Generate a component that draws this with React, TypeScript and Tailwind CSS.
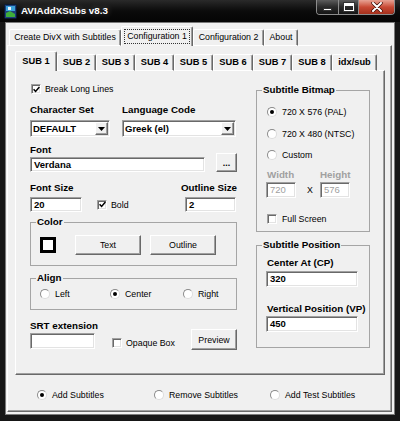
import React from 'react'

const sunken =
  'bg-white border border-t-[#a0a0a0] border-l-[#a0a0a0] border-b-white border-r-white shadow-[inset_1px_1px_0_#696969,inset_-1px_-1px_0_#e3e3e3]'
const raised =
  'bg-[#f0f0f0] border border-t-white border-l-white border-b-[#696969] border-r-[#696969] shadow-[inset_-1px_-1px_0_#a0a0a0]'
const label = 'h-[12px] leading-[12px] text-[9.8px] font-bold whitespace-nowrap'
const text = 'leading-[12px] text-[8.8px] whitespace-nowrap'

function Check({ on }: { on?: boolean }) {
  return (
    <span className={`w-[10px] h-[10px] shrink-0 flex items-center justify-center ${sunken}`}>
      {on && (
        <svg width="7" height="7" viewBox="0 0 7 7">
          <path d="M0.6 3.2 L2.6 5.4 L6.4 1" fill="none" stroke="#000" strokeWidth="1.5" />
        </svg>
      )}
    </span>
  )
}

function Radio({ on }: { on?: boolean }) {
  return (
    <span className="w-[10px] h-[10px] shrink-0 rounded-full bg-white border border-[#8a8a8a] border-b-[#dcdcdc] border-r-[#dcdcdc] flex items-center justify-center">
      {on && <span className="w-[4px] h-[4px] rounded-full bg-black" />}
    </span>
  )
}

function RadioItem({ on, children, className = '' }: { on?: boolean; children: React.ReactNode; className?: string }) {
  return (
    <div className={`flex items-center gap-[5px] h-[12px] ${className}`}>
      <Radio on={on} />
      <span className={text}>{children}</span>
    </div>
  )
}

function Field({ value, className = '', muted }: { value?: string; className?: string; muted?: boolean }) {
  return (
    <div
      className={`${sunken} flex items-center pl-[3px] text-[9.5px] leading-none ${
        muted ? 'text-[#a0a0a0] font-normal bg-[#fafafa]' : 'font-bold'
      } ${className}`}
    >
      {value}
    </div>
  )
}

function Combo({ value, className = '' }: { value: string; className?: string }) {
  return (
    <div className={`${sunken} h-[17px] flex items-center ${className}`}>
      <span className="flex-1 pl-[2px] text-[9.5px] font-bold leading-none">{value}</span>
      <span className={`w-[13px] h-[13px] mr-[1px] flex items-center justify-center ${raised}`}>
        <svg width="7" height="4" viewBox="0 0 7 4">
          <path d="M0 0 H7 L3.5 4 Z" fill="#000" />
        </svg>
      </span>
    </div>
  )
}

function Btn({ children, className = '' }: { children: React.ReactNode; className?: string }) {
  return <div className={`${raised} flex items-center justify-center ${text} ${className}`}>{children}</div>
}

function Tab({ children, active, className = '', bold }: { children: React.ReactNode; active?: boolean; className?: string; bold?: boolean }) {
  return (
    <div
      className={`shrink-0 flex items-center justify-center rounded-t-[2px] bg-[#f0f0f0] border-t border-l border-t-white border-l-white border-r border-r-[#696969] shadow-[inset_-1px_0_0_#a0a0a0] ${
        active ? 'h-[20px]' : 'h-[17px] border-b border-b-white'
      } ${bold ? 'text-[9.3px] font-bold' : 'text-[8.8px]'} leading-none whitespace-nowrap ${className}`}
    >
      {children}
    </div>
  )
}

function Group({ title, className = '', children }: { title: string; className?: string; children: React.ReactNode }) {
  return (
    <fieldset className={`border border-[#a5a5a5] ${className}`}>
      <legend className={`ml-[5px] px-[1px] ${label}`}>{title}</legend>
      {children}
    </fieldset>
  )
}

const subTabs = [
  ['SUB 1', 'w-[42px]'],
  ['SUB 2', 'w-[39px]'],
  ['SUB 3', 'w-[39px]'],
  ['SUB 4', 'w-[39px]'],
  ['SUB 5', 'w-[39px]'],
  ['SUB 6', 'w-[40px]'],
  ['SUB 7', 'w-[39px]'],
  ['SUB 8', 'w-[40px]'],
  ['idx/sub', 'w-[45px]'],
]

export default function App() {
  return (
    <div className="w-[400px] h-[421px] bg-[#161616] flex flex-col overflow-hidden font-['Liberation_Sans',Arial,sans-serif] text-black">
      {/* title bar */}
      <div className="h-[22px] flex items-start bg-gradient-to-b from-[#2a2a2a] via-[#0b0b0b] to-[#050505]">
        <div className="flex items-center h-[22px] pl-[4px] gap-[4px]">
          <svg width="13" height="15" viewBox="0 0 13 15">
            <rect x="0.5" y="0.5" width="12" height="14" rx="1" fill="#1d3f7a" stroke="#0a1a33" />
            <rect x="2" y="2" width="9" height="5" fill="#3aa0d8" />
            <path d="M2 9 L6 7 L11 10 L11 13 L2 13 Z" fill="#3fae3a" />
            <rect x="4" y="3" width="3" height="3" fill="#e8f4ff" />
          </svg>
          <span className="text-white font-bold text-[9.8px] [text-shadow:0_0_6px_rgba(255,255,255,0.35)]">
            AVIAddXSubs v8.3
          </span>
        </div>
        <div className="ml-auto mr-[5px] flex h-[15px] border border-t-0 border-[#8c8c8c] rounded-b-[4px] overflow-hidden">
          <div className="w-[22px] bg-gradient-to-b from-[#5c5c5c] via-[#2a2a2a] to-[#151515] flex items-end justify-center pb-[3px] border-r border-[#8c8c8c]">
            <span className="w-[9px] h-[3px] bg-white border border-[#333]" />
          </div>
          <div className="w-[20px] bg-gradient-to-b from-[#5c5c5c] via-[#2a2a2a] to-[#151515] flex items-center justify-center border-r border-[#8c8c8c]">
            <span className="w-[10px] h-[8px] border border-white border-t-[3px] shadow-[0_0_0_1px_#333]" />
          </div>
          <div className="w-[35px] bg-gradient-to-b from-[#e6a294] via-[#c94a35] to-[#a3301c] flex items-center justify-center">
            <svg width="12" height="10" viewBox="0 0 12 10">
              <path d="M2 1 L10 9 M10 1 L2 9" stroke="#3a0c05" strokeWidth="3.4" strokeLinecap="round" />
              <path d="M2 1 L10 9 M10 1 L2 9" stroke="#fff" strokeWidth="2" strokeLinecap="round" />
            </svg>
          </div>
        </div>
      </div>

      {/* client */}
      <div className="ml-[5px] w-[390px] h-[393px] bg-[#f0f0f0] border border-[#7a7a7a] pt-[3px] pl-[1px]">
        <div className="flex items-end h-[20px] ml-[2px] relative z-10 -mb-px">
          <Tab className="w-[112px]">Create DivX with Subtitles</Tab>
          <Tab active className="w-[72px]">
            <span className="border border-dotted border-[#333] px-[2px] py-[2px]">Configuration 1</span>
          </Tab>
          <Tab className="w-[71px]">Configuration 2</Tab>
          <Tab className="w-[34px]">About</Tab>
        </div>

        <div className="w-[385px] h-[367px] border border-t-white border-l-white border-b-[#696969] border-r-[#696969] shadow-[inset_-1px_-1px_0_#a0a0a0] pt-[5px] pl-[7px]">
          <div className="flex items-end h-[20px] relative z-10 -mb-px">
            {subTabs.map(([t, w], i) => (
              <Tab key={t} bold active={i === 0} className={w}>
                {t}
              </Tab>
            ))}
          </div>

          <div className="w-[370px] h-[305px] border border-t-white border-l-white border-b-[#696969] border-r-[#696969] shadow-[inset_-1px_-1px_0_#a0a0a0] flex items-start pl-[14px]">
            {/* left column */}
            <div className="w-[207px] mt-[12px] flex flex-col">
              <div className="h-[12px] flex items-center gap-[4px] pl-[1px]">
                <Check on />
                <span className={text}>Break Long Lines</span>
              </div>

              <div className="mt-[9px] flex">
                <span className={`w-[92px] ${label}`}>Character Set</span>
                <span className={label}>Language Code</span>
              </div>
              <div className="mt-[4px] flex">
                <Combo value="DEFAULT" className="w-[80px]" />
                <Combo value="Greek (el)" className="w-[114px] ml-[12px]" />
              </div>

              <span className={`mt-[7px] ${label}`}>Font</span>
              <div className="-mt-[3px] flex items-start h-[19px]">
                <Field value="Verdana" className="mt-[4px] w-[175px] h-[15px]" />
                <Btn className="ml-[11px] w-[21px] h-[19px] font-bold">...</Btn>
              </div>

              <div className="mt-[10px] flex">
                <span className={`w-[155px] ${label}`}>Font Size</span>
                <span className={label}>Outline Size</span>
              </div>
              <div className="mt-[3px] flex items-center h-[15px]">
                <Field value="20" className="w-[52px] h-[15px]" />
                <div className="w-[103px] pl-[15px] flex items-center gap-[4px]">
                  <Check on />
                  <span className={text}>Bold</span>
                </div>
                <Field value="2" className="w-[51px] h-[15px]" />
              </div>

              <Group title="Color" className="mt-[4px] w-[207px] pb-[10px]">
                <div className="mt-[7px] h-[20px] flex items-center pl-[9px]">
                  <span className="w-[16px] h-[16px] border-[3px] border-black bg-white" />
                  <Btn className="ml-[19px] w-[66px] h-[20px]">Text</Btn>
                  <Btn className="ml-[9px] w-[66px] h-[20px]">Outline</Btn>
                </div>
              </Group>

              <Group title="Align" className="mt-[6px] w-[207px] pb-[9px]">
                <div className="mt-[4px] flex pl-[9px]">
                  <RadioItem className="w-[70px]">Left</RadioItem>
                  <RadioItem on className="w-[73px]">Center</RadioItem>
                  <RadioItem>Right</RadioItem>
                </div>
              </Group>

              <span className={`mt-[10px] ${label}`}>SRT extension</span>
              <div className="-mt-[3px] flex items-start h-[21px]">
                <Field className="mt-[4px] w-[65px] h-[16px]" />
                <div className="mt-[8px] ml-[17px] h-[12px] flex items-center gap-[4px]">
                  <Check />
                  <span className={text}>Opaque Box</span>
                </div>
                <Btn className="ml-auto w-[46px] h-[21px]">Preview</Btn>
              </div>
            </div>

            {/* right column */}
            <div className="w-[114px] ml-[19px] mt-[13px] flex flex-col">
              <Group title="Subtitle Bitmap" className="w-[114px] pb-[6px]">
                <div className="flex flex-col pl-[10px]">
                  <RadioItem on className="mt-[10px]">720 X 576 (PAL)</RadioItem>
                  <RadioItem className="mt-[10px]">720 X 480 (NTSC)</RadioItem>
                  <RadioItem className="mt-[9px]">Custom</RadioItem>
                  <div className="mt-[8px] flex text-[#a0a0a0]">
                    <span className={`w-[53px] ${label}`}>Width</span>
                    <span className={label}>Height</span>
                  </div>
                  <div className="mt-[1px] -ml-[1px] flex items-center h-[16px]">
                    <Field muted value="720" className="w-[30px] h-[16px]" />
                    <span className={`w-[24px] pl-[11px] ${text}`}>X</span>
                    <Field muted value="576" className="w-[30px] h-[16px]" />
                  </div>
                  <div className="mt-[15px] h-[12px] flex items-center gap-[5px]">
                    <Check />
                    <span className={text}>Full Screen</span>
                  </div>
                </div>
              </Group>

              <Group title="Subtitle Position" className="mt-[7px] w-[114px] pb-[15px]">
                <div className="flex flex-col pl-[10px]">
                  <span className={`mt-[6px] ${label}`}>Center At (CP)</span>
                  <Field value="320" className="mt-[2px] -ml-[1px] w-[92px] h-[16px]" />
                  <span className={`mt-[16px] ${label}`}>Vertical Position (VP)</span>
                  <Field value="450" className="mt-[1px] -ml-[1px] w-[92px] h-[16px]" />
                </div>
              </Group>
            </div>
          </div>

          <div className="mt-[14px] pl-[22px] flex">
            <RadioItem on className="w-[117px]">Add Subtitles</RadioItem>
            <RadioItem className="w-[116px]">Remove Subtitles</RadioItem>
            <RadioItem>Add Test Subtitles</RadioItem>
          </div>
        </div>
      </div>
    </div>
  )
}
